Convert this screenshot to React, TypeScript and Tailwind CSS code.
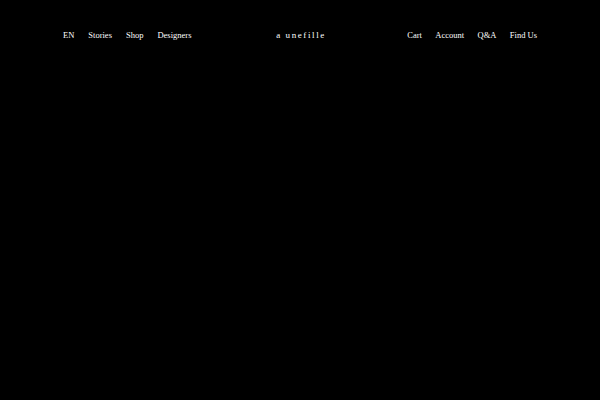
export default function App() {
  const serif = { fontFamily: '"Liberation Serif", "DejaVu Serif", serif' };
  return (
    <div className="w-[600px] h-[400px] bg-black text-white overflow-hidden" style={serif}>
      <header className="flex items-center justify-between px-[63px] pt-[29px] text-[8.5px] leading-[12px]">
        <nav className="flex gap-[14px] w-[150px]">
          <span>EN</span>
          <span>Stories</span>
          <span>Shop</span>
          <span>Designers</span>
        </nav>
        <div className="tracking-[1.6px] text-[9px] pl-[2px]">a unefille</div>
        <nav className="flex gap-[13.4px] w-[150px] justify-end">
          <span>Cart</span>
          <span>Account</span>
          <span>Q&amp;A</span>
          <span>Find Us</span>
        </nav>
      </header>
    </div>
  );
}
